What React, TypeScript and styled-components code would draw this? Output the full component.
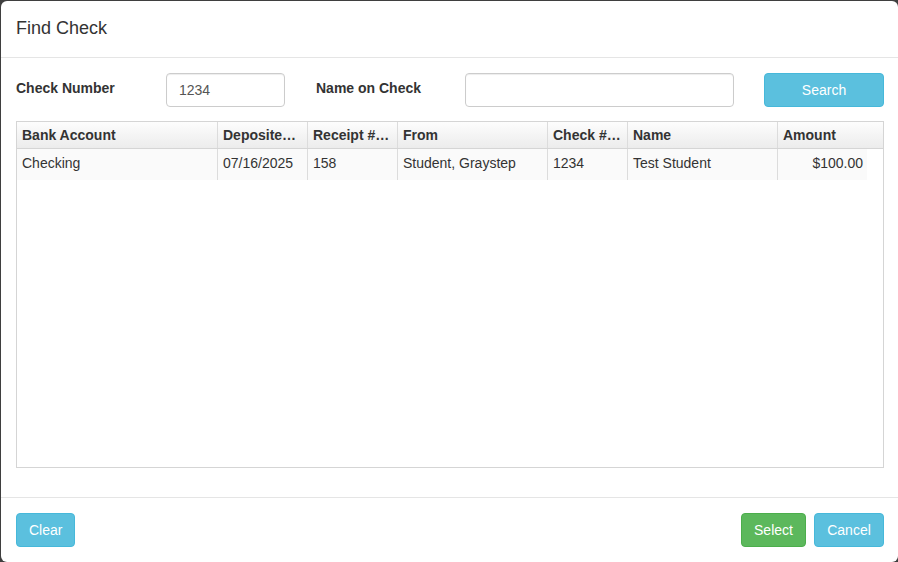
import styled, { createGlobalStyle } from 'styled-components';

const Global = createGlobalStyle`
    html, body {
        margin: 0;
        padding: 0;
        background: #3f3f3f;
    }
    body {
        font-family: "Liberation Sans", Arial, sans-serif;
        font-size: 14px;
        color: #333;
    }
    * {
        box-sizing: border-box;
    }
`;

const Modal = styled.div`
    margin: 1px 0 0 1px;
    width: 897px;
    height: 561px;
    background: #fff;
    border-radius: 6px;
    display: flex;
    flex-direction: column;
    overflow: hidden;
`;

const Header = styled.div`
    padding: 15px 15px;
    height: 57px;
    border-bottom: 1px solid #e5e5e5;
`;

const Title = styled.h4`
    margin: 0;
    font-size: 18px;
    font-weight: normal;
    line-height: 25px;
    color: #333;
`;

const Body = styled.div`
    flex: 1;
    padding: 15px 14px 0 15px;
`;

const FormRow = styled.div`
    display: flex;
    align-items: center;
    height: 34px;
`;

const Label = styled.label<{ $w: number }>`
    width: ${p => p.$w}px;
    font-weight: bold;
    font-size: 14px;
    color: #333;
    margin-top: -4px;
`;

const Input = styled.input<{ $w: number; $mr?: number }>`
    width: ${p => p.$w}px;
    margin-right: ${p => p.$mr ?? 0}px;
    height: 34px;
    padding: 6px 12px;
    font-family: inherit;
    font-size: 14px;
    color: #555;
    border: 1px solid #ccc;
    border-radius: 4px;
    outline: none;
    box-shadow: inset 0 1px 1px rgba(0, 0, 0, 0.075);
`;

const Button = styled.button<{ $variant?: 'info' | 'success'; $w: number }>`
    width: ${p => p.$w}px;
    height: 34px;
    padding: 6px 12px;
    font-family: inherit;
    font-size: 14px;
    color: #fff;
    background: ${p => (p.$variant === 'success' ? '#5cb85c' : '#5bc0de')};
    border: 1px solid ${p => (p.$variant === 'success' ? '#4cae4c' : '#46b8da')};
    border-radius: 4px;
    cursor: pointer;
`;

const Grid = styled.div`
    margin-top: 14px;
    height: 347px;
    border: 1px solid #d5d5d5;
    display: flex;
    flex-direction: column;
`;

const HeadRow = styled.div`
    display: flex;
    height: 27px;
    background: linear-gradient(to bottom, #fdfdfd, #ececec);
    border-bottom: 1px solid #d5d5d5;
`;

const HeadCell = styled.div<{ $w: number; $last?: boolean }>`
    width: ${p => p.$w}px;
    flex: ${p => (p.$last ? 1 : 'none')};
    padding: 0 5px;
    line-height: 26px;
    font-weight: bold;
    color: #333;
    white-space: nowrap;
    overflow: hidden;
    text-overflow: ellipsis;
    border-right: ${p => (p.$last ? 'none' : '1px solid #dcdcdc')};
`;

const DataArea = styled.div`
    flex: 1;
    padding-right: 16px;
`;

const DataRow = styled.div`
    display: flex;
    width: 850px;
    height: 31px;
    background: #fafafa;
`;

const Cell = styled.div<{ $w: number; $right?: boolean; $last?: boolean }>`
    flex: none;
    width: ${p => p.$w}px;
    padding: 0 5px 0 5px;
    line-height: 29px;
    text-align: ${p => (p.$right ? 'right' : 'left')};
    color: #333;
    white-space: nowrap;
    overflow: hidden;
    border-right: ${p => (p.$last ? 'none' : '1px solid #dcdcdc')};
    padding-right: ${p => (p.$right ? '4px' : '5px')};
`;

const Footer = styled.div`
    height: 65px;
    border-top: 1px solid #e5e5e5;
    padding: 15px 14px 15px 15px;
    display: flex;
    align-items: center;
    gap: 8px;
`;

const Spacer = styled.div`
    flex: 1;
`;

const columns = [
    { title: 'Bank Account', w: 201 },
    { title: 'Deposited Date', w: 90 },
    { title: 'Receipt #', w: 90 },
    { title: 'From', w: 150 },
    { title: 'Check #', w: 80 },
    { title: 'Name', w: 150 },
    { title: 'Amount', w: 89 },
];

const headTitles = ['Bank Account', 'Deposite…', 'Receipt #…', 'From', 'Check #…', 'Name', 'Amount'];

const rows = [
    ['Checking', '07/16/2025', '158', 'Student, Graystep', '1234', 'Test Student', '$100.00'],
];

export default function App() {
    return (
        <>
            <Global />
            <Modal>
                <Header>
                    <Title>Find Check</Title>
                </Header>
                <Body>
                    <FormRow>
                        <Label $w={150}>Check Number</Label>
                        <Input $w={119} $mr={31} defaultValue="1234" />
                        <Label $w={149}>Name on Check</Label>
                        <Input $w={269} $mr={30} />
                        <Button $w={120}>Search</Button>
                    </FormRow>
                    <Grid>
                        <HeadRow>
                            {columns.map((c, i) => (
                                <HeadCell key={c.title} $w={c.w} $last={i === columns.length - 1}>
                                    {headTitles[i]}
                                </HeadCell>
                            ))}
                        </HeadRow>
                        <DataArea>
                            {rows.map((r, ri) => (
                                <DataRow key={ri}>
                                    {r.map((v, i) => (
                                        <Cell
                                            key={i}
                                            $w={columns[i].w}
                                            $right={i === r.length - 1}
                                            $last={i === r.length - 1}
                                        >
                                            {v}
                                        </Cell>
                                    ))}
                                </DataRow>
                            ))}
                        </DataArea>
                    </Grid>
                </Body>
                <Footer>
                    <Button $w={59}>Clear</Button>
                    <Spacer />
                    <Button $variant="success" $w={65}>Select</Button>
                    <Button $w={70}>Cancel</Button>
                </Footer>
            </Modal>
        </>
    );
}
